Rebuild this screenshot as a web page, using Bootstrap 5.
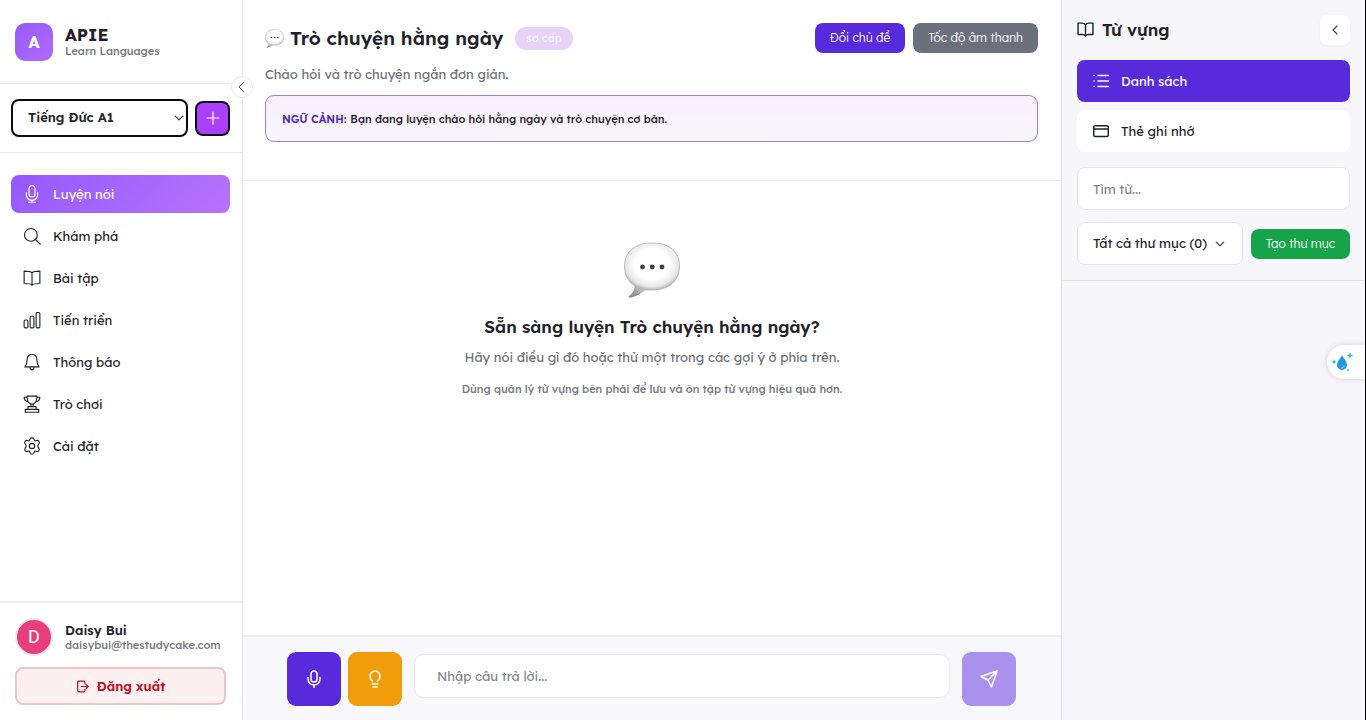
<!DOCTYPE html>
<html lang="vi">
<head>
<meta charset="utf-8">
<meta name="viewport" content="width=device-width, initial-scale=1">
<title>APIE – Learn Languages</title>
<link href="https://cdn.jsdelivr.net/npm/bootstrap@5.3.0/dist/css/bootstrap.min.css" rel="stylesheet">
<style>
:root { --line: #e9e6ee; --ink: #1f2329; --indigo: #572adb; --soft: #6e7075; }
body { font-family: Lexend, Inter, "Noto Sans", sans-serif; font-size: 13px; line-height: 20px; color: var(--ink); background: #fff; }
svg { display: block; flex: none; }
.stroke-icon { fill: none; stroke: currentColor; stroke-width: 1.5; stroke-linecap: round; stroke-linejoin: round; }
.app-shell { border-right: 1px solid #000; }
.muted { color: var(--soft); }

.side { width: 243px; flex: none; border-right: 1px solid var(--line); }
.brand-row { height: 84px; padding: 0 15px; gap: 12px; border-bottom: 1px solid var(--line); }
.brand-tile { width: 38px; height: 38px; border-radius: 10px; color: #fff; font-weight: 700; font-size: 16px; background: linear-gradient(135deg, #955cf8, #b16afb); }
.brand-name { font-size: 17px; font-weight: 700; line-height: 18px; }
.small-text { font-size: 11px; line-height: 14px; font-weight: 500; color: #77797e; }
.lang-row { height: 69px; padding: 0 12px 0 11px; gap: 7px; border-bottom: 1px solid var(--line); }
.lang-row .form-select { height: 38px; border: 2px solid #0c0b10; border-radius: 8px; padding: 0 24px 0 15px; font-size: 13px; font-weight: 600; color: var(--ink); background-position: right 2px center; background-size: 10px 10px; }
.add-btn { width: 35px; height: 35px; flex: none; border: 2px solid #0c0b10; border-radius: 8px; background: #aa40fb; color: #fff; }
.fold-btn { position: absolute; right: -11px; top: 76px; width: 22px; height: 22px; border-radius: 50%; border: 1px solid var(--line); background: #fff; color: #555; z-index: 2; }
.menu { padding: 22px 12px 0 11px; gap: 4px; }
.menu .nav-link { height: 38px; padding: 0 12px; gap: 12px; border-radius: 8px; color: var(--ink); font-size: 13px; }
.menu .nav-link.active { color: #fff; background: linear-gradient(135deg, #9459fb, #b673fb); }
.account { height: 119px; padding: 15px 16px 0 15px; border-top: 2px solid #eeecf1; gap: 11px; }
.avatar { width: 38px; height: 38px; border: 2px solid #eee9f1; border-radius: 50%; background: #e83e7b; color: #fff; font: 18px/1 Roboto, sans-serif; }
.logout-btn { height: 38px; border: 2px solid #f3c3c9; border-radius: 8px; background: #fdf0f1; color: #bf0d23; font-size: 13px; font-weight: 600; gap: 8px; }

.topic { height: 181px; padding: 23px 23px 0 22px; border-bottom: 1px solid #eeebf1; }
.topic h1 { font-size: 19px; line-height: 30px; font-weight: 600; gap: 6px; }
.topic p { margin: 11px 0; }
.level { height: 23px; padding: 0 11px; border-radius: 12px; background: #e5d3f8; color: #f8f0fd; font-size: 11px; font-weight: 500; }
.btn-sm-app { height: 30px; padding: 0 15px; border: 0; border-radius: 8px; color: #fff; font-size: 12px; font-weight: 300; white-space: nowrap; }
.bg-indigo { background: var(--indigo); }
.bg-slate { background: #6c707d; }
.bg-leaf { background: #17a34a; }
.context { height: 47px; padding: 0 16px; border: 1px solid #a47ddb; border-radius: 9px; background: linear-gradient(180deg, #faf0fc, #f7f6fd); font-size: 11px; font-weight: 500; }
.context strong { color: #5129b4; font-weight: 600; }
.ready { padding-top: 61px; }
.ready h2 { font-size: 17px; line-height: 24px; font-weight: 600; margin: 17px 0 8px; }
.note { font-size: 11px; line-height: 18px; margin-top: 13px; font-weight: 500; color: #77797e; }
.composer { height: 85px; padding: 15px 45px 0 44px; gap: 7px; border-top: 2px solid #eeedf1; background: #f8f8fb; }
.tool-btn { width: 54px; height: 54px; flex: none; border: 0; border-radius: 9px; color: #fff; }
.composer .form-control { height: 44px; margin: 2px 5px 0 5px; padding: 0 22px; border: 1px solid #eceaf0; border-radius: 10px; font-size: 13px; }
.form-control::placeholder { color: #85868b; }
.bg-amberish { background: #f19d0b; }
.bg-lilac { background: #a892ee; }

.words { width: 304px; flex: none; border-left: 1px solid #dfdde4; background: #f7f7fb; }
.words-top { height: 281px; padding: 15px 15px 0 15px; border-bottom: 1px solid #e5e3e9; }
.words-head { margin-bottom: 15px; }
.words h2 { font-size: 17px; font-weight: 600; gap: 8px; }
.back-btn { width: 30px; height: 30px; border: 0; border-radius: 7px; background: #fff; color: #444; box-shadow: 0 1px 3px #0000000a; }
.mode-btn { height: 42px; padding: 0 16px; gap: 12px; border: 0; border-radius: 8px; background: #fff; color: var(--ink); font-size: 13px; }
.mode-btn.bg-indigo { background: var(--indigo); color: #fff; }
.words .form-control { height: 43px; margin-top: 15px; padding: 0 15px; border: 1px solid #e9e7ed; border-radius: 8px; font-size: 13px; }
.words .form-select { height: 43px; padding: 0 20px 0 15px; border: 1px solid #e9e7ed; border-radius: 8px; font-size: 13px; background-position: right 17px center; background-size: 10px 10px; color: var(--ink); }
.helper { position: absolute; right: 0; top: 345px; width: 38px; height: 34px; border: 0; border-radius: 17px 0 0 17px; background: #fff; box-shadow: 0 0 6px #00000026; }
</style>
</head>
<body>
<svg width="0" height="0" class="position-absolute" aria-hidden="true">
  <defs>
    <radialGradient id="shine" cx=".5" cy=".45" r=".58"><stop offset=".55" stop-color="#fff"/><stop offset=".82" stop-color="#e8e8e8"/><stop offset="1" stop-color="#a9a9a9"/></radialGradient>
    <linearGradient id="tailShade" x1="0" y1="0" x2="0" y2="1"><stop offset="0" stop-color="#ccc"/><stop offset="1" stop-color="#858585"/></linearGradient>
    <symbol id="bubble" viewBox="0 0 56 56">
      <path d="M10 40C12 47 9 51 5 54c-1 1 0 2 2 1.500C14 54 19 50 21 46z" fill="url(#tailShade)"/>
      <path d="M28 1C45 1 55.500 9 55.500 24S45 48 28 48h-5C10 46 .5 39 .5 24S12 1 28 1z" fill="url(#shine)" stroke="#aaa" stroke-width=".7"/>
      <path d="M10 41c3 2 7 5 13 6-2 2-5 4-8 5" fill="#bdbdbd" opacity=".65"/>
      <g fill="#424242"><circle cx="18.500" cy="25" r="2.400"/><circle cx="28.200" cy="25" r="2.400"/><circle cx="38" cy="25" r="2.400"/></g>
    </symbol>
    <symbol id="book" viewBox="0 0 24 24"><path d="M12 5C10.500 3.500 8.500 2.800 1.500 2.800v16.500c7 0 9 .5 10.500 2.200 1.500-1.700 3.500-2.200 10.500-2.200V2.800C15.500 2.800 13.500 3.500 12 5zM12 5v16"/></symbol>
  </defs>
</svg>
<div class="app-shell d-flex min-vh-100 position-relative overflow-hidden">

  <aside class="side d-flex flex-column position-relative">
    <div class="brand-row d-flex align-items-center">
      <div class="brand-tile d-flex align-items-center justify-content-center">A</div>
      <div><div class="brand-name">APIE</div><div class="small-text">Learn Languages</div></div>
    </div>
    <button class="fold-btn d-flex align-items-center justify-content-center p-0" aria-label="Thu gọn"><svg class="stroke-icon" width="14" height="14" viewBox="0 0 14 14"><path stroke-width="1" d="M9 2 4 7l5 5"/></svg></button>
    <div class="lang-row d-flex align-items-center">
      <select class="form-select" aria-label="Ngôn ngữ"><option>Tiếng Đức A1</option></select>
      <button class="add-btn d-flex align-items-center justify-content-center p-0" aria-label="Thêm"><svg class="stroke-icon" width="14" height="14" viewBox="0 0 14 14"><path stroke-width="1.200" d="M7 1v12M1 7h12"/></svg></button>
    </div>
    <nav class="menu nav flex-column flex-grow-1">
      <a href="#" class="nav-link active d-flex align-items-center"><svg class="stroke-icon" width="18" height="18" viewBox="0 0 24 24"><rect x="8" y="1" width="8" height="15" rx="4"/><path d="M4.500 10v3a7.500 7.500 0 0 0 15 0v-3M12 20.500V23M7.500 23h9"/></svg>Luyện nói</a>
      <a href="#" class="nav-link d-flex align-items-center"><svg class="stroke-icon" width="18" height="18" viewBox="0 0 24 24"><circle cx="10.500" cy="10.500" r="8.500"/><path d="m17 17 6 6"/></svg>Khám phá</a>
      <a href="#" class="nav-link d-flex align-items-center"><svg class="stroke-icon" width="18" height="18"><use href="#book"/></svg>Bài tập</a>
      <a href="#" class="nav-link d-flex align-items-center"><svg class="stroke-icon" width="18" height="18" viewBox="0 0 24 24"><rect x="1.500" y="12" width="5" height="10.500" rx="1.500"/><rect x="9.500" y="7" width="5" height="15.500" rx="1.500"/><rect x="17.500" y="2" width="5" height="20.500" rx="1.500"/></svg>Tiến triển</a>
      <a href="#" class="nav-link d-flex align-items-center"><svg class="stroke-icon" width="18" height="18" viewBox="0 0 24 24"><path d="M12 2c4.500 0 6.500 3.300 6.500 7 0 5 1 7 3 9.500h-19c2-2.500 3-4.500 3-9.500 0-3.700 2-7 6.500-7zM9 19c.3 2.500 1.500 3.500 3 3.500s2.700-1 3-3.500"/></svg>Thông báo</a>
      <a href="#" class="nav-link d-flex align-items-center"><svg class="stroke-icon" width="18" height="18" viewBox="0 0 24 24"><path d="M5.500 1.500h13c.2 6-1.500 10.500-6.500 10.500S5.300 7.500 5.500 1.500zM5.500 3h-4c0 4 2 5.500 5.500 6M18.500 3h4c0 4-2 5.500-5.500 6M10.500 12v3.500h3V12M6.500 19.200v-3.700h11v3.700M3 23v-3.800h18V23z"/></svg>Trò chơi</a>
      <a href="#" class="nav-link d-flex align-items-center"><svg class="stroke-icon" width="18" height="18" viewBox="0 0 24 24"><circle cx="12" cy="12" r="3.500"/><path d="M9.500 2.500c.8-1.700 4.200-1.700 5 0l.5 1.600c.4.900 1.300 1.300 2.200 1l1.600-.5c2-.4 3.800 2.700 2.500 4.300l-1.100 1.600c-.6.900-.6 2.100 0 3l1.100 1.600c1.300 1.600-.5 4.700-2.500 4.300l-1.600-.5c-.9-.3-1.800.1-2.200 1l-.5 1.600c-.8 1.700-4.200 1.700-5 0L9 19.900c-.4-.9-1.300-1.300-2.200-1l-1.600.5c-2 .4-3.800-2.700-2.500-4.300l1.100-1.600c.6-.9.6-2.100 0-3L2.700 8.900c-1.300-1.600.5-4.700 2.500-4.300l1.600.5c.9.300 1.800-.1 2.200-1z"/></svg>Cài đặt</a>
    </nav>
    <div class="account d-flex flex-column">
      <div class="d-flex align-items-center gap-2"><div class="avatar d-flex align-items-center justify-content-center flex-shrink-0">D</div>
        <div class="ps-1"><div class="fw-semibold lh-sm">Daisy Bui</div><div class="small-text">daisybui@thestudycake.com</div></div></div>
      <button class="logout-btn d-flex align-items-center justify-content-center"><svg class="stroke-icon" width="13" height="13" viewBox="0 0 16 16"><path d="M11 4.500V3a1.500 1.500 0 0 0-1.500-1.500h-6A1.500 1.500 0 0 0 2 3v10a1.500 1.500 0 0 0 1.500 1.500h6A1.500 1.500 0 0 0 11 13v-1.500M6.500 8H15M12.500 5.500 15 8l-2.500 2.500"/></svg>Đăng xuất</button>
    </div>
  </aside>

  <main class="d-flex flex-column flex-grow-1">
    <header class="topic">
      <div class="d-flex align-items-center gap-2">
        <h1 class="d-flex align-items-center m-0"><svg width="19" height="19"><use href="#bubble"/></svg>Trò chuyện hằng ngày</h1>
        <span class="level d-flex align-items-center ms-1">sơ cấp</span>
        <button class="btn-sm-app bg-indigo ms-auto">Đổi chủ đề</button>
        <button class="btn-sm-app bg-slate">Tốc độ âm thanh</button>
      </div>
      <p class="muted">Chào hỏi và trò chuyện ngắn đơn giản.</p>
      <div class="context d-flex align-items-center gap-1"><strong>NGỮ CẢNH:</strong><span>Bạn đang luyện chào hỏi hằng ngày và trò chuyện cơ bản.</span></div>
    </header>
    <section class="ready flex-grow-1 d-flex flex-column align-items-center text-center">
      <svg width="56" height="56"><use href="#bubble"/></svg>
      <h2>Sẵn sàng luyện Trò chuyện hằng ngày?</h2>
      <p class="muted mb-0">Hãy nói điều gì đó hoặc thử một trong các gợi ý ở phía trên.</p>
      <p class="note mb-0">Dùng quản lý từ vựng bên phải để lưu và ôn tập từ vựng hiệu quả hơn.</p>
    </section>
    <form class="composer d-flex align-items-start">
      <button type="button" class="tool-btn bg-indigo d-flex align-items-center justify-content-center" aria-label="Ghi âm"><svg class="stroke-icon" width="18" height="18" viewBox="0 0 18 18"><rect x="6" y="1" width="6" height="11" rx="3"/><path d="M3 7.500V9a6 6 0 0 0 12 0V7.500M9 15v2.500"/></svg></button>
      <button type="button" class="tool-btn bg-amberish d-flex align-items-center justify-content-center" aria-label="Gợi ý"><svg class="stroke-icon" width="18" height="18" viewBox="0 0 18 18"><path d="M6.500 11C5 10 4 8.500 4 6a5 5 0 0 1 10 0c0 2.500-1 4-2.500 5M6 14h6M7 17h4"/></svg></button>
      <input class="form-control" type="text" placeholder="Nhập câu trả lời..." aria-label="Câu trả lời">
      <button type="button" class="tool-btn bg-lilac d-flex align-items-center justify-content-center" aria-label="Gửi"><svg class="stroke-icon" width="18" height="18" viewBox="0 0 18 18"><path d="M17 1 1 6.500 8 10l3.500 7zM8 10l9-9"/></svg></button>
    </form>
  </main>

  <aside class="words">
    <div class="words-top">
      <div class="words-head d-flex align-items-center justify-content-between">
        <h2 class="d-flex align-items-center m-0"><svg class="stroke-icon" width="17" height="17" viewBox="0 0 24 24"><path stroke-width="2" d="M12 5.500C11 4 9.500 3 7.500 3H1.500v16H8c2 0 3 .8 4 2.500 1-1.700 2-2.500 4-2.500h6.500V3h-6c-2 0-3.500 1-4.500 2.500zM12 5.500v16"/></svg>Từ vựng</h2>
        <button class="back-btn d-flex align-items-center justify-content-center p-0" aria-label="Ẩn"><svg class="stroke-icon" width="12" height="12" viewBox="0 0 12 12"><path stroke-width="1.200" d="M8 2 4 6l4 4"/></svg></button>
      </div>
      <button class="mode-btn bg-indigo d-flex align-items-center w-100 mb-2"><svg class="stroke-icon" width="16" height="16" viewBox="0 0 16 16"><path d="M5 2.500h10.500M5 8h10.500M5 13.500h10.500M1 2.500h.1M1 8h.1M1 13.500h.1"/></svg>Danh sách</button>
      <button class="mode-btn d-flex align-items-center w-100"><svg class="stroke-icon" width="16" height="16" viewBox="0 0 16 16"><rect x=".7" y="2.700" width="14.600" height="10.800" rx="1.500"/><path d="M1 6h14"/></svg>Thẻ ghi nhớ</button>
      <input class="form-control" type="text" placeholder="Tìm từ..." aria-label="Tìm từ">
      <div class="d-flex align-items-center gap-2 mt-2 pt-1">
        <select class="form-select" aria-label="Thư mục"><option>Tất cả thư mục (0)</option></select>
        <button class="btn-sm-app bg-leaf">Tạo thư mục</button>
      </div>
    </div>
  </aside>
  <button class="helper d-flex align-items-center p-0 ps-1" aria-label="Trợ lý"><svg width="24" height="24" viewBox="0 0 24 24"><path d="M11 5c-1 3-5 6-5 10a5 5 0 0 0 10 0c0-4-4-7-5-10z" fill="#2395e5"/><path d="M13 15.500c0 1.800-1 2.500-2.500 2.500" fill="none" stroke="#bde6ff"/><path d="m19 2 1 2.500L22.500 6 20 6.500 19 9l-1-2.500L15.500 6 18 4.500zM3 9l.7 1.700L5.500 12l-1.800.7L3 14.500l-.7-1.800L.5 12l1.800-1zM17 18l.5 1.500 1.500.5-1.500.5L17 22l-.5-1.500L15 20l1.500-.5z" fill="#36bcd2"/></svg></button>
</div>
<script src="https://cdn.jsdelivr.net/npm/bootstrap@5.3.0/dist/js/bootstrap.bundle.min.js"></script>
</body>
</html>
